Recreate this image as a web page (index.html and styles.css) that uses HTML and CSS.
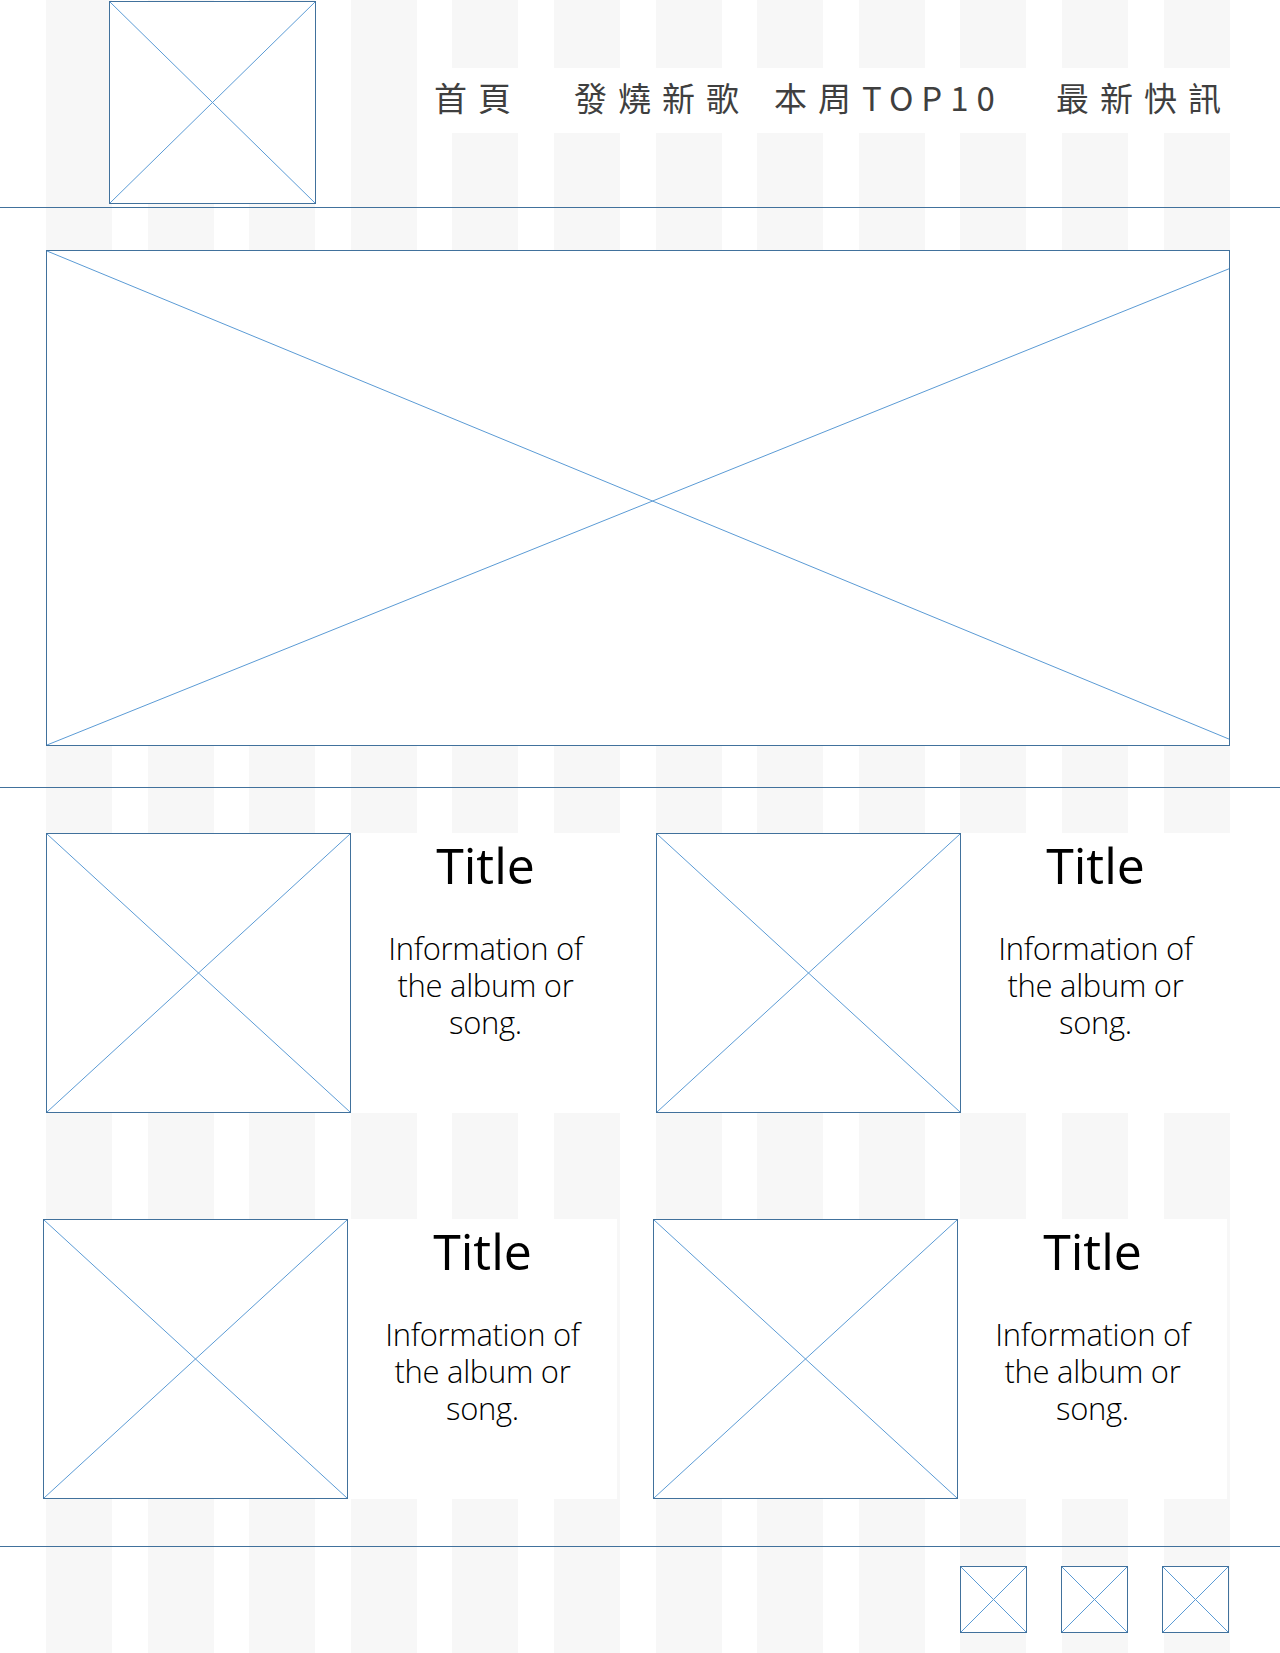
FILE: index.html
```html
<!DOCTYPE html>
<html lang="zh-Hant">
<head>
    <meta charset="UTF-8">
    <meta name="viewport" content="width=device-width, initial-scale=1.0">
    <title>音樂網站 - Wireframe</title>
    <link rel="stylesheet" href="styles.css">
</head>
<body>
    <div class="page">
        <header class="site-header">
            <div class="placeholder logo">
                <svg viewBox="0 0 100 100" preserveAspectRatio="none"><line x1="0" y1="0" x2="100" y2="100"/><line x1="100" y1="0" x2="0" y2="100"/></svg>
            </div>
            <nav class="main-nav">
                <a href="#">首頁</a>
                <a href="#">發燒新歌</a>
                <a href="#">本周<span class="latin">TOP10</span></a>
                <a href="#">最新快訊</a>
            </nav>
        </header>

        <section class="placeholder hero">
            <svg viewBox="0 0 100 100" preserveAspectRatio="none"><line x1="0" y1="0" x2="100" y2="98.8"/><line x1="0" y1="100" x2="100" y2="3.6"/></svg>
        </section>

        <div class="divider"></div>

        <main class="songs">
            <div class="song-row">
                <article class="song-card">
                    <div class="placeholder cover">
                        <svg viewBox="0 0 100 100" preserveAspectRatio="none"><line x1="0" y1="0" x2="100" y2="100"/><line x1="100" y1="0" x2="0" y2="100"/></svg>
                    </div>
                    <div class="song-info">
                        <h3>Title</h3>
                        <p>Information of the album or song.</p>
                    </div>
                </article>
                <article class="song-card">
                    <div class="placeholder cover">
                        <svg viewBox="0 0 100 100" preserveAspectRatio="none"><line x1="0" y1="0" x2="100" y2="100"/><line x1="100" y1="0" x2="0" y2="100"/></svg>
                    </div>
                    <div class="song-info">
                        <h3>Title</h3>
                        <p>Information of the album or song.</p>
                    </div>
                </article>
            </div>
            <div class="song-row second">
                <article class="song-card">
                    <div class="placeholder cover">
                        <svg viewBox="0 0 100 100" preserveAspectRatio="none"><line x1="0" y1="0" x2="100" y2="100"/><line x1="100" y1="0" x2="0" y2="100"/></svg>
                    </div>
                    <div class="song-info">
                        <h3>Title</h3>
                        <p>Information of the album or song.</p>
                    </div>
                </article>
                <article class="song-card">
                    <div class="placeholder cover">
                        <svg viewBox="0 0 100 100" preserveAspectRatio="none"><line x1="0" y1="0" x2="100" y2="100"/><line x1="100" y1="0" x2="0" y2="100"/></svg>
                    </div>
                    <div class="song-info">
                        <h3>Title</h3>
                        <p>Information of the album or song.</p>
                    </div>
                </article>
            </div>
        </main>

        <footer class="site-footer">
            <div class="social">
                <a href="#" class="placeholder icon">
                    <svg viewBox="0 0 100 100" preserveAspectRatio="none"><line x1="0" y1="0" x2="100" y2="100"/><line x1="100" y1="0" x2="0" y2="100"/></svg>
                </a>
                <a href="#" class="placeholder icon">
                    <svg viewBox="0 0 100 100" preserveAspectRatio="none"><line x1="0" y1="0" x2="100" y2="100"/><line x1="100" y1="0" x2="0" y2="100"/></svg>
                </a>
                <a href="#" class="placeholder icon">
                    <svg viewBox="0 0 100 100" preserveAspectRatio="none"><line x1="0" y1="0" x2="100" y2="100"/><line x1="100" y1="0" x2="0" y2="100"/></svg>
                </a>
            </div>
        </footer>
    </div>
</body>
</html>
```

FILE: styles.css
```css
* {
    margin: 0;
    padding: 0;
    box-sizing: border-box;
}

body {
    background: #fff;
    color: #000;
    font-family: 'Open Sans', 'Noto Sans CJK TC', sans-serif;
}

/* 12 column grid guide behind the wireframe */
.page {
    width: 1280px;
    min-height: 1653px;
    background-image: repeating-linear-gradient(90deg, #f7f7f7 0, #f7f7f7 66px, transparent 66px, transparent 101.6px);
    background-size: 1184px 100%;
    background-position: 46px 0;
    background-repeat: no-repeat;
}

.placeholder {
    display: block;
    background: #fff;
    border: 1px solid #41719c;
}

.placeholder svg {
    display: block;
    width: 100%;
    height: 100%;
}

.placeholder line {
    stroke: #5b9bd5;
    stroke-width: 1;
    vector-effect: non-scaling-stroke;
}

.site-header {
    display: flex;
    align-items: flex-start;
    height: 208px;
    border-bottom: 1px solid #41719c;
}

.logo {
    width: 207px;
    height: 203px;
    margin: 1px 0 0 109px;
}

.main-nav {
    display: grid;
    grid-template-columns: 140px 200px 282px auto;
    align-items: center;
    width: 810px;
    height: 65px;
    margin: 68px 0 0 104px;
    padding: 0 0 6px 14px;
    background: #fff;
}

.main-nav a {
    font-family: 'Noto Sans CJK TC', sans-serif;
    font-size: 33px;
    font-weight: 400;
    line-height: 1;
    letter-spacing: 11px;
    color: #3f3f3f;
    text-decoration: none;
    white-space: nowrap;
}

.main-nav .latin {
    letter-spacing: 8px;
}

.hero {
    width: 1184px;
    height: 496px;
    margin: 42px 0 0 46px;
}

.divider {
    margin-top: 41px;
    border-top: 1px solid #41719c;
}

.songs {
    padding-top: 45px;
}

.song-row {
    display: grid;
    grid-template-columns: 574px 574px;
    column-gap: 36px;
    margin-left: 46px;
}

.song-row.second {
    margin-top: 106px;
    margin-left: 43px;
}

.song-card {
    display: flex;
    height: 280px;
    background: #fff;
}

.cover {
    flex: 0 0 305px;
    height: 280px;
}

.song-info {
    flex: 1;
    display: flex;
    flex-direction: column;
    align-items: center;
    text-align: center;
}

.song-info h3 {
    font-size: 50px;
    font-weight: 400;
    line-height: 1.2;
    margin-top: 2px;
}

.song-info p {
    width: 230px;
    margin-top: 35px;
    font-size: 31px;
    font-weight: 300;
    line-height: 37px;
    letter-spacing: -0.3px;
}

.site-footer {
    margin-top: 47px;
    border-top: 1px solid #41719c;
}

.social {
    display: flex;
    justify-content: flex-end;
    gap: 34px;
    padding: 19px 51px 0 0;
}

.icon {
    width: 67px;
    height: 67px;
}
```
